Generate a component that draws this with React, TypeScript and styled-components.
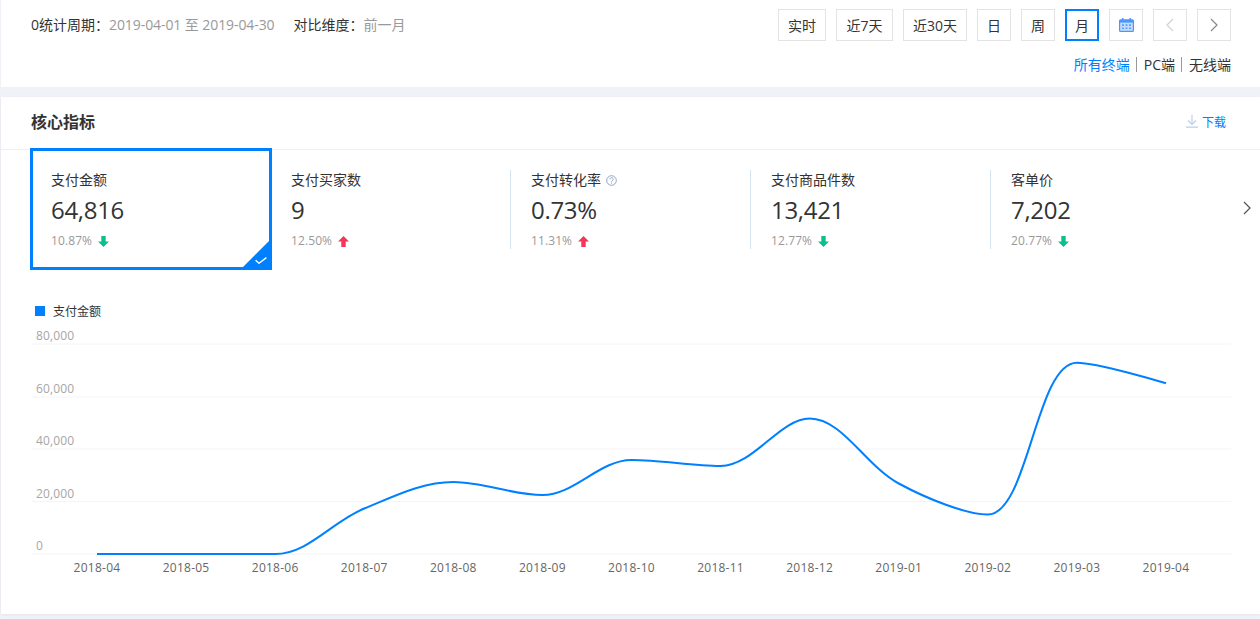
import React from 'react';
import styled, { createGlobalStyle } from 'styled-components';

const blue = '#0080ff';

const GlobalStyle = createGlobalStyle`
  html, body {
    margin: 0;
    padding: 0;
    background: #f1f2f8;
    font-family: "Open Sans", "Noto Sans CJK SC", sans-serif;
    color: #333;
  }
  * {
    box-sizing: border-box;
  }
`;

const ranges = [
  { label: '实时', width: 48 },
  { label: '近7天', width: 57 },
  { label: '近30天', width: 64 },
  { label: '日', width: 34 },
  { label: '周', width: 34 },
  { label: '月', width: 34 },
];

const metrics = [
  { name: '支付金额', value: '64,816', delta: '10.87%', up: false, help: false },
  { name: '支付买家数', value: '9', delta: '12.50%', up: true, help: false },
  { name: '支付转化率', value: '0.73%', delta: '11.31%', up: true, help: true },
  { name: '支付商品件数', value: '13,421', delta: '12.77%', up: false, help: false },
  { name: '客单价', value: '7,202', delta: '20.77%', up: false, help: false },
];

const months = [
  '2018-04', '2018-05', '2018-06', '2018-07', '2018-08', '2018-09', '2018-10',
  '2018-11', '2018-12', '2019-01', '2019-02', '2019-03', '2019-04',
];
const series = [554, 554, 554, 508.5, 482, 495, 460, 466, 418.5, 483.5, 514.5, 362.7, 383.3];
const gridLines = [
  { y: 344, label: '80,000' },
  { y: 397, label: '60,000' },
  { y: 449, label: '40,000' },
  { y: 501.5, label: '20,000' },
  { y: 554, label: '0' },
];
const chartTop = 325;
const xAt = (i: number) => 96 + i * 89.08;

// echarts style handles, split by segment length and flat at turning points
const smoothPath = (ys: number[]) => {
  const smooth = 0.35;
  const pts = ys.map((y, i) => [xAt(i), y - chartTop]);
  const handles = pts.map((p, i) => {
    const prev = pts[i - 1];
    const next = pts[i + 1];
    if (!prev || !next) return { in: p, out: p };
    const vx = next[0] - prev[0];
    const turning = (p[1] - prev[1]) * (next[1] - p[1]) <= 0;
    const vy = turning ? 0 : next[1] - prev[1];
    const lenPrev = Math.hypot(p[0] - prev[0], p[1] - prev[1]);
    const lenNext = Math.hypot(next[0] - p[0], next[1] - p[1]);
    const rPrev = (lenPrev / (lenPrev + lenNext)) * smooth;
    const rNext = (lenNext / (lenPrev + lenNext)) * smooth;
    return {
      in: [p[0] - vx * rPrev, p[1] - vy * rPrev],
      out: [p[0] + vx * rNext, p[1] + vy * rNext],
    };
  });
  let d = `M${pts[0][0]} ${pts[0][1]}`;
  for (let i = 1; i < pts.length; i++) {
    const a = handles[i - 1].out;
    const b = handles[i].in;
    d += ` C${a[0]} ${a[1]} ${b[0]} ${b[1]} ${pts[i][0]} ${pts[i][1]}`;
  }
  return d;
};

const Chevron = ({ dir }: { dir: 'left' | 'right' }) => (
  <svg width="10" height="14" viewBox="0 0 10 14" fill="none" stroke="currentColor" strokeWidth="1.25">
    <path d={dir === 'left' ? 'M8 1L2 7l6 6' : 'M2 1l6 6-6 6'} />
  </svg>
);

const CalendarIcon = () => (
  <svg width="15" height="14" viewBox="0 0 15 14">
    <path fill="#4c96fb" d="M3 0h1.5v1.2h6V0H12v1.2h1.5A1.5 1.5 0 0 1 15 2.7V12.5a1.5 1.5 0 0 1-1.5 1.5h-12A1.5 1.5 0 0 1 0 12.5V2.7a1.5 1.5 0 0 1 1.5-1.5H3z" />
    <path fill="#c3dcfd" d="M1.2 4.6h12.6v8.2H1.2z" />
    <path fill="#5a9ffb" d="M3 6.2h2v1.7H3zM6.5 6.2h2v1.7h-2zM10 6.2h2v1.7h-2zM3 9.4h2v1.7H3zM6.5 9.4h2v1.7h-2zM10 9.4h2v1.7h-2z" />
  </svg>
);

const DownloadIcon = () => (
  <svg width="12" height="13" viewBox="0 0 12 13" fill="none" stroke="#bcd0e6" strokeWidth="1.2">
    <path d="M6 0v9M2 5.5L6 9.5l4-4M0 12.2h12" />
  </svg>
);

const HelpIcon = () => (
  <svg width="11" height="11" viewBox="0 0 11 11" fill="none" stroke="#8fa6bf" strokeWidth="1">
    <circle cx="5.5" cy="5.5" r="4.8" />
    <path d="M3.9 4.3a1.6 1.6 0 1 1 2.5 1.3c-.6.4-.9.6-.9 1.2M5.5 7.6v1" />
  </svg>
);

const TrendArrow = ({ up }: { up: boolean }) => (
  <svg width="11" height="11" viewBox="0 0 11 11" fill={up ? '#f5365c' : '#0cc08d'}>
    <path d={up ? 'M5.5 0L11 5.5H7.7V11H3.3V5.5H0z' : 'M3.3 0h4.4v5.5H11L5.5 11 0 5.5h3.3z'} />
  </svg>
);

const Chart = () => (
  <ChartSvg width="1259" height="265" viewBox="0 0 1259 265">
    {gridLines.map((g) => (
      <g key={g.label}>
        <line x1="31" x2="1230" y1={g.y - chartTop} y2={g.y - chartTop} stroke="#f4f4fa" strokeWidth="1" />
        <text x="35" y={g.y - chartTop - 4} fontSize="12" letterSpacing="0.15" fill="#a6a6a6">
          {g.label}
        </text>
      </g>
    ))}
    <path d={smoothPath(series)} fill="none" stroke={blue} strokeWidth="2" />
    {months.map((m, i) => (
      <text key={m} x={xAt(i)} y="247" fontSize="12" letterSpacing="0.25" fill="#666" textAnchor="middle">
        {m}
      </text>
    ))}
  </ChartSvg>
);

const App = () => {
  return (
    <Page>
      <GlobalStyle />
      <FilterCard>
        <Period>
          <span>
            0统计周期：<Muted>2019-04-01 至 2019-04-30</Muted>
          </span>
          <span>
            对比维度：<Muted>前一月</Muted>
          </span>
        </Period>
        <FilterRight>
          <Buttons>
            {ranges.map((r) => (
              <RangeButton key={r.label} $width={r.width} $active={r.label === '月'}>
                {r.label}
              </RangeButton>
            ))}
            <IconButton>
              <CalendarIcon />
            </IconButton>
            <IconButton $faint>
              <Chevron dir="left" />
            </IconButton>
            <IconButton>
              <Chevron dir="right" />
            </IconButton>
          </Buttons>
          <Terminals>
            <TerminalActive>所有终端</TerminalActive>
            <Sep />
            <span>PC端</span>
            <Sep />
            <span>无线端</span>
          </Terminals>
        </FilterRight>
      </FilterCard>

      <CoreCard>
        <CoreHeader>
          <CoreTitle>核心指标</CoreTitle>
          <Download>
            <DownloadIcon />
            下载
          </Download>
        </CoreHeader>
        <MetricRow>
          {metrics.map((m, i) => (
            <Metric key={m.name} $active={i === 0} $divider={i > 1}>
              <MetricName>
                {m.name}
                {m.help && <HelpIcon />}
              </MetricName>
              <MetricValue>{m.value}</MetricValue>
              <MetricDelta>
                {m.delta}
                <TrendArrow up={m.up} />
              </MetricDelta>
              {i === 0 && (
                <Corner>
                  <svg width="12" height="7" viewBox="0 0 12 7" fill="none" stroke="#fff" strokeWidth="1.4">
                    <path d="M.6 3.2L4 6.2 11.4.6" />
                  </svg>
                </Corner>
              )}
            </Metric>
          ))}
          <NextMetric>
            <Chevron dir="right" />
          </NextMetric>
        </MetricRow>
        <Legend>
          <LegendSwatch />
          支付金额
        </Legend>
        <Chart />
      </CoreCard>
    </Page>
  );
};

export default App;

const Page = styled.div`
  height: 619px;
  padding-left: 1px;
  overflow: hidden;
`;

const FilterCard = styled.section`
  height: 87px;
  background: #fff;
  padding: 9px 29px 0 30px;
  display: flex;
  justify-content: space-between;
`;

const Period = styled.div`
  display: flex;
  gap: 19px;
  height: 32px;
  align-items: center;
  font-size: 14px;
  line-height: 20px;
`;

const Muted = styled.span`
  color: #999;
  letter-spacing: -0.08px;
`;

const FilterRight = styled.div`
  display: flex;
  flex-direction: column;
  align-items: flex-end;
`;

const Buttons = styled.div`
  display: flex;
  gap: 10px;
`;

const RangeButton = styled.div<{ $active?: boolean; $width: number }>`
  height: 32px;
  width: ${(p) => p.$width}px;
  display: flex;
  align-items: center;
  justify-content: center;
  font-size: 14px;
  color: #333;
  background: #fff;
  border: ${(p) => (p.$active ? `2px solid ${blue}` : '1px solid #e3e3e3')};
`;

const IconButton = styled.div<{ $faint?: boolean }>`
  width: 34px;
  height: 32px;
  display: flex;
  align-items: center;
  justify-content: center;
  border: 1px solid #e3e3e3;
  color: ${(p) => (p.$faint ? '#d3d3d3' : '#888')};
`;

const Terminals = styled.div`
  margin-top: 13px;
  display: flex;
  align-items: center;
  height: 20px;
  font-size: 14px;
  color: #333;
`;

const TerminalActive = styled.span`
  color: ${blue};
`;

const Sep = styled.i`
  width: 1px;
  height: 15px;
  margin: 0 7px 0 6px;
  background: #999;
`;

const CoreCard = styled.section`
  margin-top: 10px;
  height: 517px;
  background: #fff;
  box-shadow: 0 1px 3px rgba(0, 0, 0, 0.06);
`;

const CoreHeader = styled.header`
  height: 53px;
  padding: 0 34px 3px 30px;
  display: flex;
  align-items: center;
  justify-content: space-between;
  border-bottom: 1px solid #f0f0f0;
`;

const CoreTitle = styled.h2`
  margin: 0 0 2px;
  font-size: 16px;
  font-weight: 700;
  color: #333;
`;

const Download = styled.a`
  display: flex;
  align-items: center;
  gap: 4px;
  font-size: 12px;
  color: ${blue};
`;

const MetricRow = styled.div`
  display: flex;
  margin: -2px 0 0 29px;
  position: relative;
`;

const Metric = styled.div<{ $active?: boolean; $divider?: boolean }>`
  position: relative;
  width: ${(p) => (p.$active ? '242px' : '240px')};
  height: 122px;
  padding: ${(p) => (p.$active ? '19px 0 0 18px' : '22px 0 0 20px')};
  border: ${(p) => (p.$active ? `3px solid ${blue}` : 'none')};
  margin-right: ${(p) => (p.$active ? '-1px' : '0')};

  &::before {
    content: '';
    display: ${(p) => (p.$divider ? 'block' : 'none')};
    position: absolute;
    left: -1px;
    top: 22px;
    height: 79px;
    width: 1px;
    background: #d6e4f0;
  }
`;

const MetricName = styled.div`
  display: flex;
  align-items: center;
  gap: 5px;
  font-size: 14px;
  line-height: 20px;
  color: #333;
`;

const MetricValue = styled.div`
  margin-top: 3px;
  font-size: 24px;
  line-height: 34px;
  letter-spacing: -0.3px;
  color: #333;
`;

const MetricDelta = styled.div`
  margin-top: 5px;
  display: flex;
  align-items: center;
  gap: 6px;
  font-size: 12px;
  line-height: 18px;
  letter-spacing: 0.1px;
  color: #999;
`;

const Corner = styled.div`
  position: absolute;
  right: 0;
  bottom: 0;
  width: 26px;
  height: 26px;
  background: ${blue};
  clip-path: polygon(100% 0, 100% 100%, 0 100%);
  display: flex;
  align-items: flex-end;
  justify-content: flex-end;
  padding: 0 2px 3px 0;
`;

const NextMetric = styled.div`
  position: absolute;
  right: 8px;
  top: 53px;
  color: #555;
  display: flex;
`;

const Legend = styled.div`
  margin: 32px 0 0 34px;
  height: 18px;
  display: flex;
  align-items: center;
  gap: 8px;
  font-size: 12px;
  color: #333;
`;

const LegendSwatch = styled.i`
  width: 10px;
  height: 10px;
  background: ${blue};
`;

const ChartSvg = styled.svg`
  display: block;
  margin-top: 5px;
  font-family: "Open Sans", sans-serif;
`;
